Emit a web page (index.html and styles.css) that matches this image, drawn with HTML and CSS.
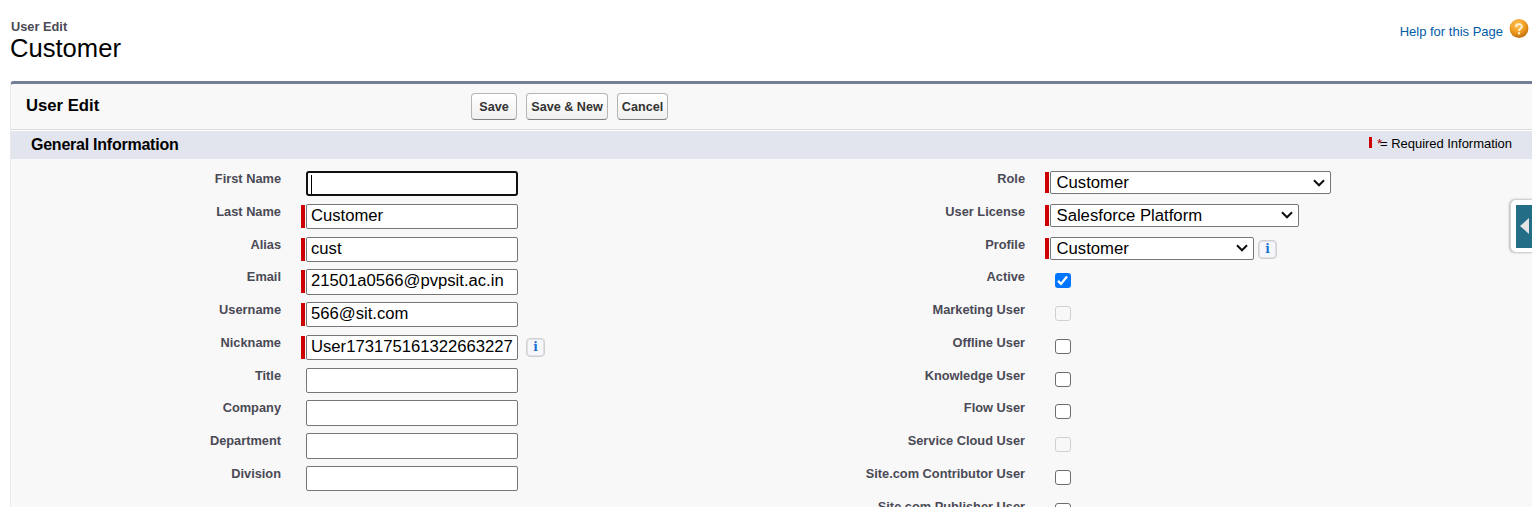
FILE: index.html
```html
<!DOCTYPE html>
<html lang="en">
<head>
<meta charset="utf-8">
<title>User Edit</title>
<link rel="stylesheet" href="styles.css">
</head>
<body>
<header class="page-head">
  <div class="titles">
    <div class="kicker"><span>User Edit</span></div>
    <h1>Customer</h1>
  </div>
  <a class="help"><span class="help-text">Help for this Page</span>
    <svg class="help-icon" width="20" height="20" viewBox="0 0 20 20">
      <defs><radialGradient id="orb" cx=".42" cy=".3" r=".7"><stop offset="0" stop-color="#ffc65a"/><stop offset=".6" stop-color="#ef9a1c"/><stop offset="1" stop-color="#c07010"/></radialGradient></defs>
      <circle cx="10" cy="9.500" r="9.4" fill="url(#orb)"/>
      <path d="M7 7.900C7 4.300 12.900 4.400 12.900 7.600C12.900 9.700 10 9.600 10 11.900" fill="none" stroke="#fff0d0" stroke-width="2"/>
      <rect x="9" y="13.200" width="2.100" height="2.100" fill="#fff0d0"/>
    </svg>
  </a>
</header>
<main class="panel">
  <div class="toolbar">
    <h2>User Edit</h2>
    <div class="buttons">
      <button class="btn save">Save</button>
      <button class="btn save-new">Save &amp; New</button>
      <button class="btn cancel">Cancel</button>
    </div>
  </div>
  <div class="section">
    <h3>General Information</h3>
    <div class="legend"><i class="legend-bar"></i><span class="star">*</span><span class="legend-text">= Required Information</span></div>
  </div>
  <form class="form">
    <div class="column left">
      <div class="row"><label>First Name</label><div class="field"><div class="input focused"><i class="caret"></i></div></div></div>
      <div class="row"><label>Last Name</label><div class="field required"><input class="input" value="Customer"></div></div>
      <div class="row"><label>Alias</label><div class="field required"><input class="input" value="cust"></div></div>
      <div class="row"><label>Email</label><div class="field required"><input class="input" value="21501a0566@pvpsit.ac.in"></div></div>
      <div class="row"><label>Username</label><div class="field required"><input class="input" value="566@sit.com"></div></div>
      <div class="row"><label>Nickname</label><div class="field required"><input class="input" value="User17317516132266322798"><span class="info">i</span></div></div>
      <div class="row"><label>Title</label><div class="field"><input class="input"></div></div>
      <div class="row"><label>Company</label><div class="field"><input class="input"></div></div>
      <div class="row"><label>Department</label><div class="field"><input class="input"></div></div>
      <div class="row"><label>Division</label><div class="field"><input class="input"></div></div>
    </div>
    <div class="column right">
      <div class="row"><label>Role</label><div class="field required"><div class="select role"><span>Customer</span><svg width="12" height="8" viewBox="0 0 12 8"><path d="M1 1.300L6 6.300L11 1.300"/></svg></div></div></div>
      <div class="row"><label>User License</label><div class="field required"><div class="select license"><span>Salesforce Platform</span><svg width="12" height="8" viewBox="0 0 12 8"><path d="M1 1.300L6 6.300L11 1.300"/></svg></div></div></div>
      <div class="row"><label>Profile</label><div class="field required"><div class="select profile"><span>Customer</span><svg width="12" height="8" viewBox="0 0 12 8"><path d="M1 1.300L6 6.300L11 1.300"/></svg></div><span class="info">i</span></div></div>
      <div class="row"><label>Active</label><div class="field"><span class="check checked"><svg width="15" height="15" viewBox="0 0 15 15"><path d="M3 7.900L6 10.900L12 3.600"/></svg></span></div></div>
      <div class="row"><label>Marketing User</label><div class="field"><span class="check disabled"></span></div></div>
      <div class="row"><label>Offline User</label><div class="field"><span class="check"></span></div></div>
      <div class="row"><label>Knowledge User</label><div class="field"><span class="check"></span></div></div>
      <div class="row"><label>Flow User</label><div class="field"><span class="check"></span></div></div>
      <div class="row"><label>Service Cloud User</label><div class="field"><span class="check disabled"></span></div></div>
      <div class="row"><label>Site.com Contributor User</label><div class="field"><span class="check"></span></div></div>
      <div class="row"><label>Site.com Publisher User</label><div class="field"><span class="check"></span></div></div>
    </div>
  </form>
</main>
<aside class="drawer"><div class="drawer-face"><svg width="10" height="16" viewBox="0 0 10 16"><path d="M9 0V16L0 8Z" fill="#e4e4e4"/></svg></div></aside>
</body>
</html>
```
FILE: styles.css
```css
* { box-sizing: border-box; }
body { margin: 0; width: 1532px; height: 507px; overflow: hidden; position: relative; background: #fff; color: #000; font-family: "Liberation Sans", Arial, sans-serif; }
h1, h2, h3 { margin: 0; }
.page-head { height: 81px; padding: 19px 3px 0 10px; display: flex; justify-content: space-between; }
.kicker { height: 15px; padding-left: 1px; font: bold 12.8px/16px "Liberation Sans", Arial, sans-serif; color: #4a4a56; }
h1 { font-weight: normal; font-size: 25.6px; line-height: 28px; }
.help { display: flex; height: 20px; gap: 6px; color: #015ba7; font-size: 13px; line-height: 25px; }
.panel { margin-left: 10px; height: 426px; overflow: hidden; background: #f8f8f8; border-top: 3px solid #747e96; border-left: 1px solid #eaeaea; border-radius: 4px 0 0 0; }
.toolbar { height: 46px; border-bottom: 1px solid #dbdbdb; padding: 9px 0 0 15px; display: flex; align-items: flex-start; box-shadow: 0 1px #fff; }
h2 { width: 445px; font-size: 16.7px; line-height: 25px; }
.buttons { display: flex; gap: 9px; }
.btn { height: 27px; padding: 0; border: 1px solid #b5b5b5; border-bottom-color: #7f7f7f; border-radius: 4px; background: linear-gradient(#fff, #f0f0f0); color: #333; font: bold 12.6px/24px "Liberation Sans", Arial, sans-serif; white-space: nowrap; }
.save { width: 46px; }
.save-new { width: 82px; }
.cancel { width: 51px; }
.section { margin-top: 1px; height: 28px; padding: 0 20px; background: #e3e5ee; display: flex; justify-content: space-between; }
h3 { font-size: 16px; line-height: 28px; letter-spacing: -0.24px; }
.legend { display: flex; font-size: 13px; line-height: 26px; letter-spacing: -0.03px; }
.legend-bar { width: 3px; height: 11px; margin: 6px 5px 0 0; background: #c00; }
.star { color: #a00; }
.legend-text { margin-left: -2px; }
.form { padding-top: 12px; display: flex; }
.left { width: 744px; }
.row { height: 32.77px; display: flex; align-items: flex-start; }
label { width: 270px; text-align: right; font-weight: bold; font-size: 12.8px; line-height: 16px; color: #4a4a56; white-space: nowrap; }
.field { margin-left: 20px; padding-left: 5px; height: 26px; display: flex; align-items: flex-start; position: relative; }
.required::before { content: ""; position: absolute; left: 0; top: 1px; width: 4px; height: 23px; background: #c00; }
.right .required::before { height: 21px; }
.input { width: 212px; height: 25.4px; padding: 0 4px 1.4px; border: 1px solid #767676; border-radius: 2px; background: #fff; font: 16.65px/20px "Liberation Sans", Arial, sans-serif; color: #000; }
.focused { border: 2px solid #101010; border-radius: 3px; padding: 2px 3px; }
.caret { display: block; width: 1px; height: 19px; background: #000; }
.info { width: 19px; height: 19px; margin: 3px 0 0 8px; border: 1px solid #cfcfd2; border-radius: 4px; box-shadow: inset 0 0 0 1px #e2e2e5; background: #f6f7fa; color: #1a74d2; text-align: center; font: bold 12px/17px "DejaVu Serif", serif; }
.select + .info { margin-left: 4px; }
.select { height: 23px; padding: 0 5px 0 5.5px; display: flex; justify-content: space-between; align-items: center; border: 1px solid #767676; border-radius: 2px; background: #fff; font-size: 16.7px; line-height: 21px; }
.select path { fill: none; stroke: #111; stroke-width: 2; }
.role { width: 281px; }
.license { width: 249px; }
.profile { width: 204px; }
.check { width: 15.500px; height: 15px; margin: 4px 0 0 5px; border: 1.500px solid #6d6d6d; border-radius: 3px; background: #fff; }
.disabled { border-color: #d0d0d0; background: #f8f8f8; }
.checked { border: 0; background: #0075ff; }
.checked svg { display: block; }
.checked path { fill: none; stroke: #fff; stroke-width: 2.300; }
.drawer { position: absolute; right: 0; top: 199px; width: 22px; height: 54px; padding: 5px 0 4px 5px; background: #fff; border: 1px solid #cfd2d6; border-right: 0; border-radius: 6px 0 0 6px; box-shadow: -1px 0 2px #bbb; }
.drawer-face { height: 43px; padding: 13px 0 0 4px; background: #236d86; }
```
